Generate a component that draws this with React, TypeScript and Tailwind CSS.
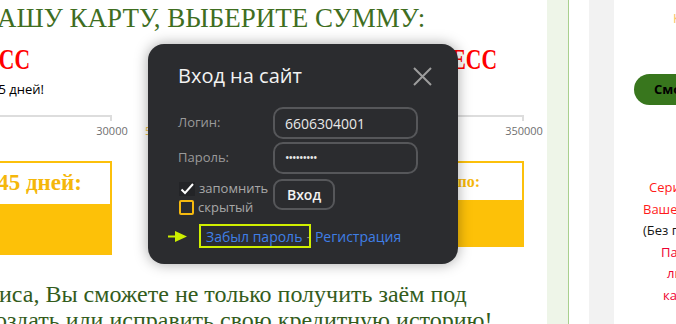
import React from "react";

type ColProps = {
  colClass: string;
  titleWrap: string;
  subtitle: string;
  subWrap: string;
  lineWrap: string;
  label: string;
  labelWrap: string;
  labelClass: string;
  boxWrap: string;
  boxText: string;
  boxTextClass: string;
  whiteClass: string;
  yellowClass: string;
};

function Column(p: ColProps) {
  return (
    <div className={p.colClass}>
      <div className={p.titleWrap}>
        <span className="shrink-0 inline-block origin-right scale-x-[0.72] text-[30px] leading-[36px] font-bold text-[#ff0000] whitespace-nowrap font-['Liberation_Serif',serif]">
          ЭКСПРЕСС
        </span>
      </div>
      <div className={p.subWrap}>{p.subtitle}</div>
      <div className={p.lineWrap}>
        <div className="h-[6px] border-t-2 border-r-2 border-[#dddddd]" />
      </div>
      <div className={p.labelWrap}>
        <span className={p.labelClass}>{p.label}</span>
      </div>
      <div className={p.boxWrap}>
        <div className="border-2 border-[#fcc00b]">
          <div className={p.whiteClass}>
            <span className={p.boxTextClass}>{p.boxText}</span>
          </div>
          <div className={p.yellowClass} />
        </div>
      </div>
    </div>
  );
}

export default function App() {
  return (
    <div className="w-[676px] h-[324px] overflow-hidden relative flex bg-white">
      {/* main column */}
      <div className="w-[547px] shrink-0 overflow-hidden">
        <h1 className="pt-[2px] ml-[-3px] whitespace-nowrap text-[27px] leading-[32px] text-[#3f6e1f] font-['Liberation_Serif',serif]">
          АШУ КАРТУ, ВЫБЕРИТЕ СУММУ:
        </h1>
        <div className="mt-[7px] ml-[-61px] flex items-start gap-[33px]">
          <Column
            colClass="w-[173px] shrink-0"
            titleWrap="flex justify-end pr-[82px]"
            subtitle="до 45 дней!"
            subWrap="mt-[3px] h-[18px] leading-[18px] text-[13px] text-black flex justify-end pr-[68px] whitespace-nowrap font-['Open_Sans',sans-serif]"
            lineWrap="mt-[17px]"
            label="30000"
            labelWrap="mt-[3px] h-[14px] flex justify-end"
            labelClass="translate-x-1/2 text-[11px] leading-[14px] text-[#707070] font-['Open_Sans',sans-serif]"
            boxWrap="mt-[23px]"
            boxText="на 45 дней:"
            boxTextClass="shrink-0 text-[23px] font-bold text-[#f5b70a] whitespace-nowrap font-['Liberation_Serif',serif]"
            whiteClass="h-[41px] bg-white flex items-center justify-end pr-[28px]"
            yellowClass="h-[49px] bg-[#fdc108]"
          />
          <Column
            colClass="w-[173px] shrink-0"
            titleWrap="flex justify-center"
            subtitle="до 20 дней!"
            subWrap="mt-[3px] h-[18px] leading-[18px] text-[13px] text-black text-center whitespace-nowrap font-['Open_Sans',sans-serif]"
            lineWrap="mt-[17px] ml-[8px]"
            label="5000"
            labelWrap="mt-[3px] h-[14px] flex justify-start"
            labelClass="text-[11px] leading-[14px] text-[#f0c040] font-['Open_Sans',sans-serif]"
            boxWrap="mt-[23px] ml-[8px]"
            boxText="на 20 дней:"
            boxTextClass="shrink-0 text-[21px] font-bold text-[#f5b70a] whitespace-nowrap font-['Liberation_Serif',serif]"
            whiteClass="h-[41px] bg-white flex items-center justify-center"
            yellowClass="h-[49px] bg-[#fdc108]"
          />
          <Column
            colClass="w-[173px] shrink-0"
            titleWrap="flex justify-end pr-[27px]"
            subtitle="до 30 дней!"
            subWrap="mt-[3px] h-[18px] leading-[18px] text-[13px] text-black text-left pl-[12px] whitespace-nowrap font-['Open_Sans',sans-serif]"
            lineWrap="mt-[17px]"
            label="350000"
            labelWrap="mt-[3px] h-[14px] flex justify-end"
            labelClass="translate-x-1/2 text-[11px] leading-[14px] text-[#707070] font-['Open_Sans',sans-serif]"
            boxWrap="mt-[23px]"
            boxText="на срок по:"
            boxTextClass="shrink-0 text-[16px] font-bold text-[#f5b70a] whitespace-nowrap font-['Liberation_Serif',serif]"
            whiteClass="h-[37px] bg-white flex items-center justify-end pr-[42px]"
            yellowClass="h-[45px] bg-[#fdc108]"
          />
        </div>
        <div className="mt-[26px] text-[24px] leading-[26px] text-[#335c1c] whitespace-nowrap font-['Liberation_Serif',serif]">
          <div className="ml-[-1px]">иса, Вы сможете не только получить заём под</div>
          <div className="ml-[-5px]">оздать или исправить свою кредитную историю!</div>
        </div>
      </div>

      {/* strips */}
      <div className="w-[21px] shrink-0 bg-[#eef5e8]" />
      <div className="w-px shrink-0 bg-[#a9d08e]" />
      <div className="w-[20px] shrink-0 bg-white" />
      <div className="w-[25px] shrink-0 bg-[#f2f2f2]" />

      {/* sidebar */}
      <div className="w-[62px] shrink-0 overflow-hidden text-[13px] font-['Open_Sans',sans-serif]">
        <div className="pt-[8px] pl-[59px] leading-[20px] text-[#f7c26b] whitespace-nowrap">Кредит</div>
        <div className="mt-[46px] ml-[20px] w-[160px] h-[31px] rounded-full bg-[#38761d] flex items-center pl-[20px] font-bold text-black whitespace-nowrap">
          Смотреть
        </div>
        <div className="mt-[72px] leading-[21.5px] whitespace-nowrap">
          <div className="pl-[35px] text-[#ff1a1a]">Серия и номер</div>
          <div className="pl-[29px] text-[#ff1a1a]">Вашего паспорта</div>
          <div className="pl-[29px] text-[#161616]">(Без пробелов)</div>
          <div className="pl-[47px] text-[#ee0030]">Пароль от</div>
          <div className="pl-[53px] text-[#ee0030]">личного</div>
          <div className="pl-[49px] text-[#ee0030]">кабинета</div>
        </div>
      </div>

      {/* modal */}
      <div className="absolute left-[148px] top-[44px] w-[310px] h-[220px] rounded-[16px] bg-[#2b2c2f] shadow-[0_0_14px_rgba(0,0,0,0.35)] font-['Open_Sans',sans-serif]">
        <div className="flex items-center justify-between pl-[30px] pr-[26px] pt-[18px]">
          <div className="text-[20px] leading-[28px] text-[#f2f2f2]">Вход на сайт</div>
          <svg width="19" height="19" viewBox="0 0 19 19" className="mt-[1px]">
            <path d="M1 1 L18 18 M18 1 L1 18" stroke="#9d9d9d" strokeWidth="2" fill="none" />
          </svg>
        </div>
        <div className="mt-[17px] pl-[30px] grid grid-cols-[95px_145px] gap-y-[3px] items-center">
          <div className="text-[13px] text-[#9a9a9a]">Логин:</div>
          <div className="h-[32px] border-2 border-[#56575a] rounded-[10px] pl-[10px] flex items-center text-[14px] text-[#e8e8e8]">
            6606304001
          </div>
          <div className="text-[13px] text-[#9a9a9a]">Пароль:</div>
          <div className="h-[32px] border-2 border-[#56575a] rounded-[10px] pl-[10px] flex items-center text-[12px] tracking-[-1px] text-[#e8e8e8]">
            •••••••••
          </div>
        </div>
        <div className="mt-[5px] pl-[30px] flex items-start">
          <div className="w-[95px] flex flex-col">
            <div className="h-[19px] flex items-center gap-[4px]">
              <svg width="16" height="14" viewBox="0 0 16 14" className="ml-[1px]">
                <rect x="0" y="0" width="16" height="14" fill="#232427" />
                <path d="M2.5 7.5 L6 11 L14 2" stroke="#ffffff" strokeWidth="2" fill="none" />
              </svg>
              <span className="text-[13px] text-[#a8a8a8]">запомнить</span>
            </div>
            <div className="h-[19px] flex items-center gap-[4px]">
              <div className="ml-[1px] w-[15px] h-[15px] border-2 border-[#f5b90f] rounded-[2px]" />
              <span className="text-[13px] text-[#a8a8a8]">скрытый</span>
            </div>
          </div>
          <div className="w-[62px] h-[31px] border-2 border-[#56575a] rounded-[9px] flex items-center justify-center text-[14px] font-semibold text-[#f2f2f2]">
            Вход
          </div>
        </div>
        <div className="relative mt-[7px] h-[24px] pl-[20px] flex items-center">
          <svg width="19" height="11" viewBox="0 0 19 11">
            <polygon points="0,4.5 7,4.5 7,0 19,5.5 7,11 7,6.5 0,6.5" fill="#cdef00" />
          </svg>
          <span className="ml-[19px] text-[14px] text-[#3f7fe6]">Забыл пароль</span>
          <span className="mx-[4px] text-[14px] text-[#8a8a8a]">-</span>
          <span className="text-[14px] text-[#3f7fe6]">Регистрация</span>
          <div className="absolute left-[51px] top-0 w-[112px] h-[24px] border-2 border-[#d0ef00]" />
        </div>
      </div>
    </div>
  );
}
